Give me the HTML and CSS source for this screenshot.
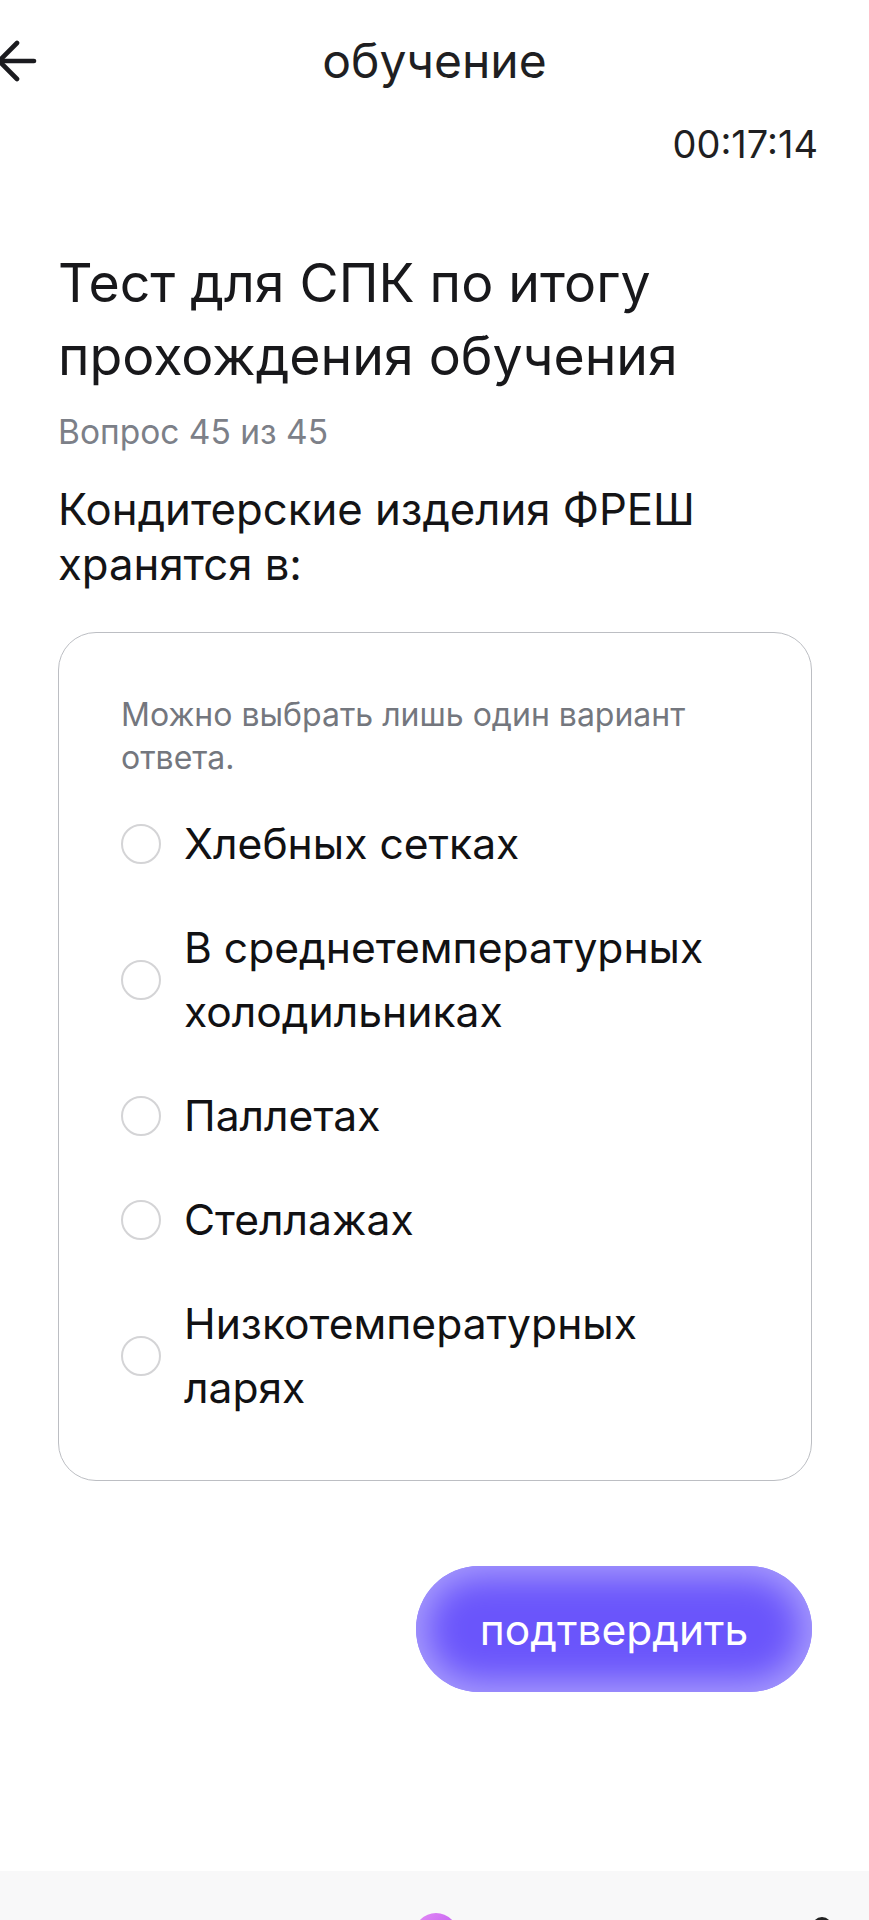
FILE: index.html
```html
<!DOCTYPE html>
<html lang="ru">
<head>
<meta charset="utf-8">
<title>обучение</title>
<link rel="stylesheet" href="styles.css">
</head>
<body>
<div class="screen">
  <header class="topbar">
    <button class="back" aria-label="Назад">
      <svg width="40" height="40" viewBox="0 0 40 40" fill="none" stroke="#1b1b1f" stroke-width="4.6" stroke-linecap="round" stroke-linejoin="round">
        <path d="M17 2 L-1 20 L17 38"/>
        <path d="M-1 20 H34"/>
      </svg>
    </button>
    <h1 class="title">обучение</h1>
    <span></span>
  </header>
  <div class="timer-row"><span class="timer">00:17:14</span></div>

  <main class="content">
    <h2 class="test-title">Тест для СПК по итогу прохождения обучения</h2>
    <p class="counter">Вопрос 45 из 45</p>
    <p class="question">Кондитерские изделия ФРЕШ хранятся в:</p>

    <section class="card">
      <p class="hint">Можно выбрать лишь один вариант ответа.</p>
      <ul class="options">
        <li class="option"><span class="radio"></span><span class="label">Хлебных сетках</span></li>
        <li class="option"><span class="radio"></span><span class="label">В среднетемпературных холодильниках</span></li>
        <li class="option"><span class="radio"></span><span class="label">Паллетах</span></li>
        <li class="option"><span class="radio"></span><span class="label">Стеллажах</span></li>
        <li class="option"><span class="radio"></span><span class="label">Низкотемпературных ларях</span></li>
      </ul>
    </section>

    <div class="actions">
      <button class="confirm">подтвердить</button>
    </div>
  </main>

  <nav class="bottombar">
    <span class="nav-dot"></span>
    <span class="nav-icon"></span>
  </nav>
</div>
</body>
</html>
```

FILE: styles.css
```css
* { box-sizing: border-box; }
html, body { margin: 0; padding: 0; background: #ffffff; }
body {
  font-family: Inter, "Noto Sans", "Liberation Sans", sans-serif;
  color: #18181b;
  width: 869px;
  height: 1920px;
  overflow: hidden;
}
.screen { width: 869px; height: 1920px; display: flex; flex-direction: column; }

.topbar {
  height: 122px;
  display: grid;
  grid-template-columns: 1fr auto 1fr;
  align-items: center;
}
.back {
  border: 0; background: none; padding: 0; margin: 0;
  width: 40px; height: 40px; display: block; overflow: visible;
}
.back svg { display: block; overflow: visible; }
.title {
  margin: 0;
  font-size: 48px;
  font-weight: 400;
  color: #1f1f22;
  line-height: 56px;
}

.timer-row {
  display: flex;
  justify-content: flex-end;
  padding-right: 51px;
  height: 44px;
  align-items: center;
}
.timer { font-size: 38px; color: #1f1f22; line-height: 44px; }

.content { padding: 0 57px 0 58px; display: flex; flex-direction: column; }

.test-title {
  margin: 80px 0 0;
  font-size: 53.6px;
  font-weight: 400;
  line-height: 73px;
  color: #18181b;
}
.counter {
  margin: 20px 0 0;
  font-size: 33.5px;
  line-height: 40px;
  color: #7c8088;
}
.question {
  margin: 30px 0 0;
  font-size: 43.7px;
  line-height: 55px;
  color: #141416;
}

.card {
  margin-top: 40px;
  border: 1.8px solid #bcbec3;
  border-radius: 38px;
  padding: 60px 70px 60px 62px;
}
.hint {
  margin: 0;
  font-size: 32px;
  line-height: 43px;
  color: #74777e;
}
.options { list-style: none; margin: 33px 0 0; padding: 0; display: flex; flex-direction: column; gap: 40px; }
.option { display: flex; align-items: center; gap: 23px; }
.radio {
  flex: none;
  width: 40px; height: 40px;
  border-radius: 50%;
  border: 2px solid #d4d4d6;
  background: #fff;
}
.label { font-size: 42.6px; line-height: 64px; color: #111113; }

.actions { display: flex; justify-content: flex-end; margin-top: 85px; }
.confirm {
  width: 396px; height: 126px;
  border: 0; border-radius: 63px;
  background: #6a55fb;
  box-shadow: inset 0 0 34px 10px #ab9ffd;
  color: #fff;
  font-family: inherit;
  font-size: 42.5px;
  font-weight: 400;
  padding: 0;
}

.bottombar {
  margin-top: auto;
  flex: none;
  height: 49px;
  background: #f8f8f9;
  position: relative;
  overflow: hidden;
}
.nav-dot {
  position: absolute; left: 414px; top: 42px;
  width: 44px; height: 44px; border-radius: 50%;
  background: linear-gradient(135deg, #e58cf5, #b34cf0);
}
.nav-icon {
  position: absolute; left: 812px; top: 46px;
  width: 20px; height: 20px; border-radius: 50%;
  border: 3px solid #222;
}
```
